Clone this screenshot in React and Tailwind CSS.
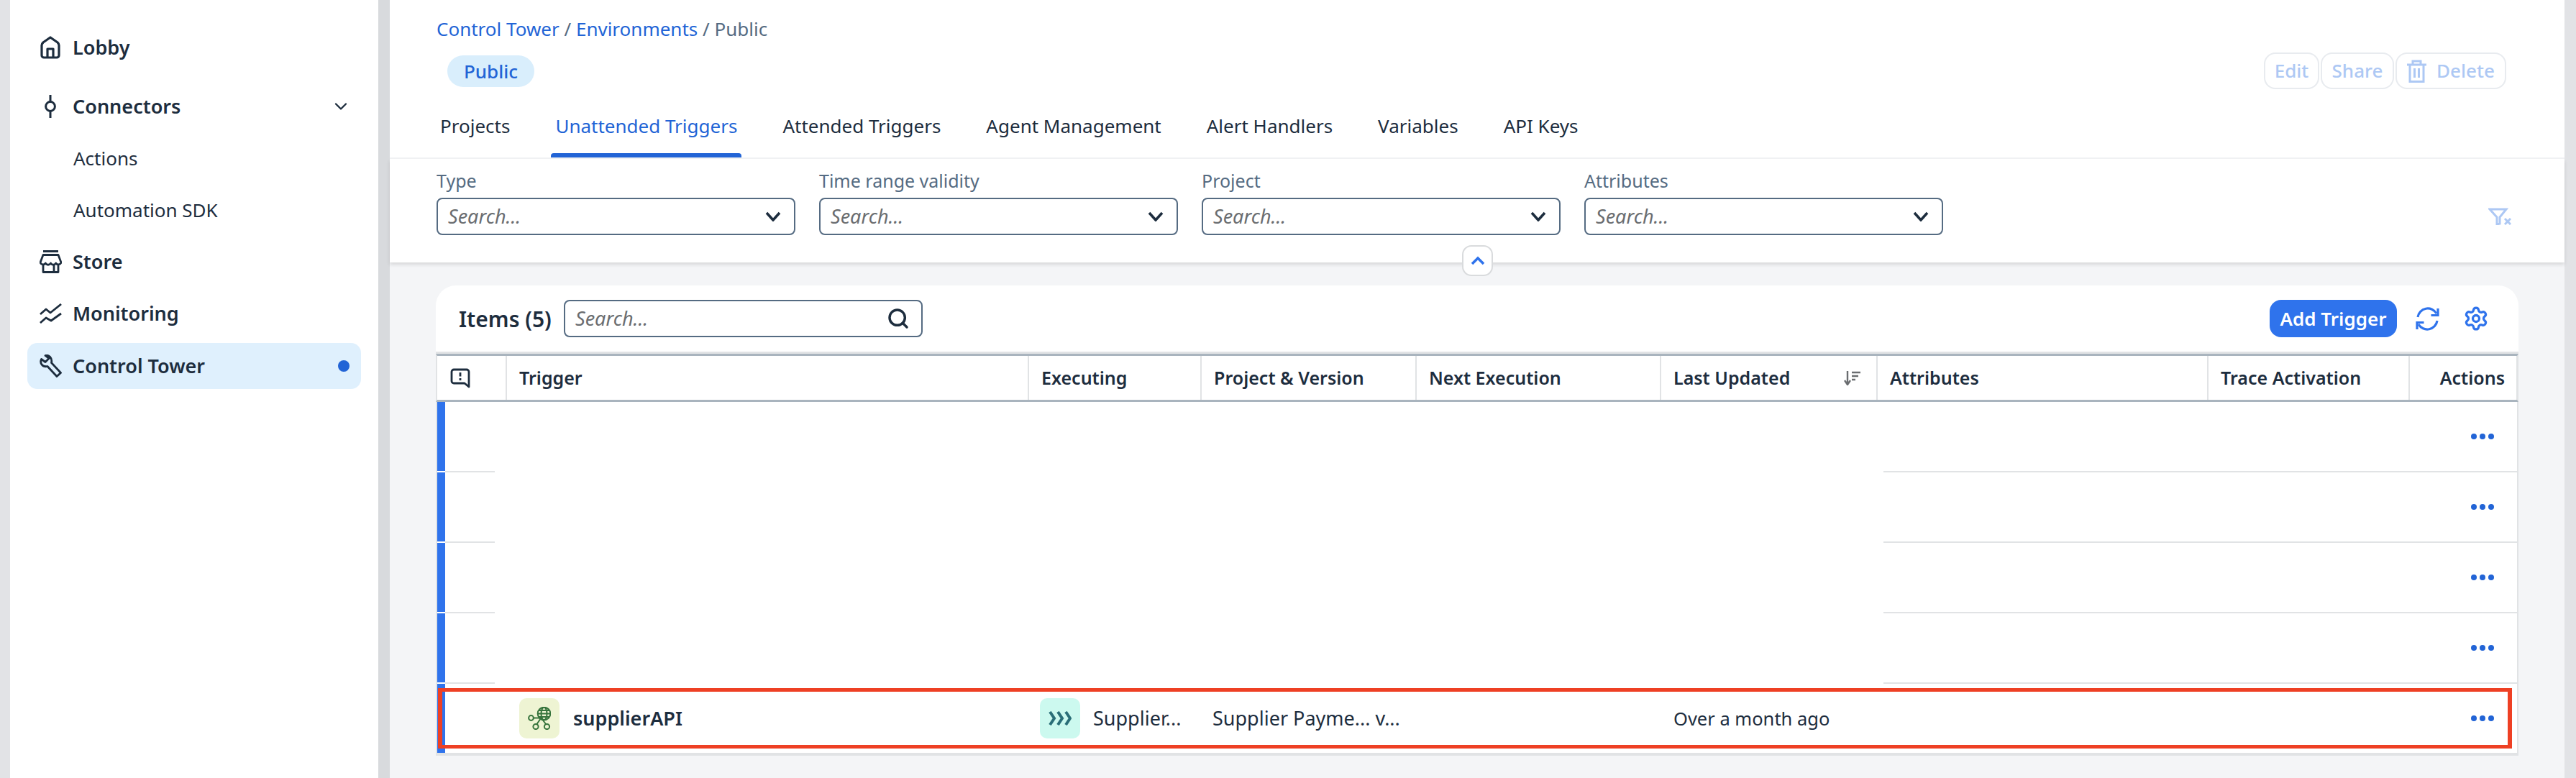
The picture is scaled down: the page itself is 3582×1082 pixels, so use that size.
import React from 'react'
import { ChevronDown, Search, Settings } from 'lucide-react'

const FONT = "font-['Noto_Sans','Open_Sans',sans-serif]"

const TABS = ['Projects', 'Unattended Triggers', 'Attended Triggers', 'Agent Management', 'Alert Handlers', 'Variables', 'API Keys']
const FILTERS = ['Type', 'Time range validity', 'Project', 'Attributes']
const COLS = 'grid-cols-[97px_726px_240px_299px_340px_301px_460px_280px_150px]'

function HomeIcon() {
  return (
    <svg width="28" height="32" viewBox="0 0 28 32" fill="none" stroke="#1d2d3e" strokeWidth="3.2" strokeLinejoin="round">
      <path d="M2 13 C2 11 3 10 4 9 L14 2 L24 9 C25 10 26 11 26 13 V27 a3 3 0 0 1 -3 3 H5 a3 3 0 0 1 -3 -3 Z" />
      <path d="M10 30 V18 h8 V30" />
    </svg>
  )
}

function ConnectorIcon() {
  return (
    <svg width="16" height="32" viewBox="0 0 16 32" fill="none" stroke="#1d2d3e" strokeWidth="3">
      <circle cx="8" cy="16" r="6.4" />
      <path d="M8 0 V9 M8 23 V32" />
    </svg>
  )
}

function StoreIcon() {
  return (
    <svg width="31" height="32" viewBox="0 0 31 32" fill="none" stroke="#1d2d3e" strokeWidth="2.8" strokeLinejoin="round">
      <path d="M5 1.5 H26 M5 6.5 H26 L30 17 a4 4 0 0 1 -7.3 1 a4 4 0 0 1 -7.2 0 a4 4 0 0 1 -7.2 0 a4 4 0 0 1 -7.3 -1 Z" />
      <path d="M5 21 V30.5 H26 V21 M5 30.5 H20 V21" />
    </svg>
  )
}

function MonitorIcon() {
  return (
    <svg width="31" height="28" viewBox="0 0 31 28" fill="none" stroke="#1d2d3e" strokeWidth="2.8" strokeLinejoin="round">
      <path d="M1 15 L9 8 L15 13 L30 1" />
      <path d="M1 27 L9 20 L16 24 L30 14" />
    </svg>
  )
}

function WrenchIcon() {
  return (
    <svg width="31" height="32" viewBox="0 0 31 32" fill="none" stroke="#1d2d3e" strokeWidth="2.8" strokeLinejoin="round">
      <path d="M8 1.5 L13 5.5 L8 10.5 L2.5 6.5 C0 12 4 18 11 16.5 L24 30.5 L29.5 25.5 L16.5 11.5 C18 5 13 0 8 1.5 Z" />
    </svg>
  )
}

function NavItem({ icon, label, active, chevron }) {
  return (
    <div className={`flex h-[64px] w-[464px] items-center rounded-[14px] pl-[16px] pr-[16px] ${active ? 'bg-[#dff0fd]' : ''}`}>
      <span className="mr-[15px] flex w-[32px] shrink-0 items-center justify-center">{icon}</span>
      <span className="flex-1 text-[27px] font-semibold text-[#1d2d3e]">{label}</span>
      {chevron && <ChevronDown size={28} strokeWidth={2} color="#1d2d3e" className="mr-[-2px]" />}
      {active && <span className="h-[16px] w-[16px] rounded-full bg-[#2264d6]" />}
    </div>
  )
}

function Sidebar() {
  return (
    <aside className="w-[512px] shrink-0 bg-white pl-[24px] pt-[34px]">
      <NavItem icon={<HomeIcon />} label="Lobby" />
      <div className="mt-[18px]">
        <NavItem icon={<ConnectorIcon />} label="Connectors" chevron />
      </div>
      <div className="pl-[64px] pt-[4px] text-[26px] text-[#1d2d3e]">
        <div className="flex h-[72px] items-center">Actions</div>
        <div className="flex h-[72px] items-center">Automation SDK</div>
      </div>
      <div className="mt-[4px] flex flex-col gap-[8px]">
        <NavItem icon={<StoreIcon />} label="Store" />
        <NavItem icon={<MonitorIcon />} label="Monitoring" />
        <div className="mt-[1px]">
          <NavItem icon={<WrenchIcon />} label="Control Tower" active />
        </div>
      </div>
    </aside>
  )
}

function ActionButton({ children, className }) {
  return (
    <div className={`flex h-[51px] items-center justify-center gap-[14px] rounded-[16px] border-2 border-[#e8ebef] bg-white text-[26px] font-medium text-[#adc8f4] ${className}`}>
      {children}
    </div>
  )
}

function Header() {
  return (
    <div className="bg-white">
      <div className="flex h-[221px] flex-col border-b-2 border-[#f2f3f5]">
        <div className="flex">
          <div className="flex-1 pl-[65px]">
            <div className="pt-[24px] text-[26px] leading-[32px] text-[#556b82]">
              <span className="text-[#2264d6]">Control Tower</span> / <span className="text-[#2264d6]">Environments</span> / Public
            </div>
            <div className="ml-[15px] mt-[21px] flex h-[44px] w-[121px] items-center justify-center rounded-full bg-[#d9eefc] text-[26px] font-medium text-[#2264d6]">Public</div>
          </div>
          <div className="mr-[81px] mt-[73px] flex gap-[2px]">
            <ActionButton className="w-[77px]">Edit</ActionButton>
            <ActionButton className="w-[102px]">Share</ActionButton>
            <ActionButton className="w-[154px]">
              <svg width="27" height="32" viewBox="0 0 27 32" fill="none" stroke="#adc8f4" strokeWidth="3">
                <path d="M0 7 H27 M8 7 V2 H19 V7 M4 7 V30.5 H23 V7 M10.5 12 V25 M16.5 12 V25" />
              </svg>
              Delete
            </ActionButton>
          </div>
        </div>
        <div className="mt-auto flex gap-[51px] pl-[64px]">
          {TABS.map(tab => (
            <div key={tab} className="flex flex-col items-stretch">
              <div className={`h-[54px] px-[6px] text-[26px] leading-[32px] ${tab === 'Unattended Triggers' ? 'text-[#2264d6]' : 'text-[#1d2d3e]'}`}>{tab}</div>
              <div className={`h-[6px] rounded-t-[4px] ${tab === 'Unattended Triggers' ? 'bg-[#2264d6]' : ''}`} />
            </div>
          ))}
        </div>
      </div>
      <div className="relative flex h-[144px] gap-[33px] pl-[65px] pt-[16px] shadow-[0_3px_5px_rgba(0,0,0,0.12)]">
        {FILTERS.map(label => (
          <div key={label} className="w-[499px]">
            <div className="h-[38px] text-[25px] leading-[28px] text-[#556b82]">{label}</div>
            <div className="flex h-[52px] items-center justify-between rounded-[8px] border-2 border-[#556b82] pl-[14px] pr-[18px]">
              <span className="text-[27px] italic text-[#6a6d70]">Search...</span>
              <svg width="22" height="14" viewBox="0 0 22 14" fill="none" stroke="#1d2d3e" strokeWidth="3.6">
                <path d="M2 2 L11 12 L20 2" />
              </svg>
            </div>
          </div>
        ))}
        <svg className="absolute right-[74px] top-[68px]" width="32" height="24" viewBox="0 0 32 24" fill="none" stroke="#adc8f4" strokeWidth="3">
          <path d="M2 2 H25 L16 13 V22 L12 23 V13 Z" />
          <path d="M23 15 L31 23 M31 15 L23 23" />
        </svg>
        {/* collapse handle sits over the panel edge */}
        <div className="absolute left-[1491px] top-[120px] flex h-[43px] w-[43px] items-center justify-center rounded-[13px] border-2 border-[#d9dbdd] bg-white">
          <svg width="20" height="13" viewBox="0 0 20 13" fill="none" stroke="#2f73ec" strokeWidth="3.6">
            <path d="M2 11 L10 3 L18 11" />
          </svg>
        </div>
      </div>
    </div>
  )
}

function HeaderCell({ children, className = '' }) {
  return (
    <div className={`flex items-center border-r-2 border-[#e1e3e5] pl-[17px] text-[25px] font-semibold text-[#1d2d3e] ${className}`}>
      {children}
    </div>
  )
}

function Dots({ className = '' }) {
  return (
    <div className={`flex gap-[4px] pr-[32px] ${className}`}>
      <span className="h-[8px] w-[8px] rounded-full bg-[#2264d6]" />
      <span className="h-[8px] w-[8px] rounded-full bg-[#2264d6]" />
      <span className="h-[8px] w-[8px] rounded-full bg-[#2264d6]" />
    </div>
  )
}

function EmptyRow() {
  return (
    <div className="relative flex h-[98px] items-center justify-end border-b-2 border-transparent">
      <span className="absolute bottom-[-2px] left-0 h-[2px] w-[69px] bg-[#e1e3e5]" />
      <span className="absolute bottom-[-2px] right-0 h-[2px] w-[881px] bg-[#e1e3e5]" />
      <Dots />
    </div>
  )
}

function Table() {
  return (
    <div className="mt-[20px] border-t-[3px] border-[#e1e3e5]">
      <div className={`grid h-[67px] ${COLS} border-x-2 border-b-[3px] border-t-[3px] border-b-[#a9b4be] border-t-[#a9b4be] border-x-[#e1e3e5]`}>
        <HeaderCell className="pl-[18px]">
          <svg width="28" height="28" viewBox="0 0 28 28" fill="none" stroke="#1d2d3e" strokeWidth="2.8" strokeLinejoin="round">
            <path d="M5 2 H23 a3 3 0 0 1 3 3 V26 L20 21 H5 a3 3 0 0 1 -3 -3 V5 a3 3 0 0 1 3 -3 Z" />
            <path d="M14 6 V11.5 M14 14 V17" />
          </svg>
        </HeaderCell>
        <HeaderCell>Trigger</HeaderCell>
        <HeaderCell>Executing</HeaderCell>
        <HeaderCell>Project &amp; Version</HeaderCell>
        <HeaderCell>Next Execution</HeaderCell>
        <HeaderCell className="justify-between pr-[22px]">
          Last Updated
          <svg width="23" height="20" viewBox="0 0 23 20" fill="none" stroke="#6a6d70" strokeWidth="2.4">
            <path d="M5 0 V18 M1 13 L5 19 L9 13 M11 2 H23 M11 7 H20 M11 12 H16" />
          </svg>
        </HeaderCell>
        <HeaderCell>Attributes</HeaderCell>
        <HeaderCell>Trace Activation</HeaderCell>
        <HeaderCell className="justify-end border-r-0 pl-0 pr-[16px]">Actions</HeaderCell>
      </div>
      <div className="flex border-x-2 border-b-4 border-[#e1e3e5] bg-white">
        <div className="flex w-[11px] shrink-0 flex-col gap-[2px]">
          <span className="h-[96px] bg-[#2f73ec]" />
          <span className="h-[96px] bg-[#2f73ec]" />
          <span className="h-[96px] bg-[#2f73ec]" />
          <span className="h-[96px] bg-[#2f73ec]" />
          <span className="h-[96px] bg-[#2f73ec]" />
        </div>
        <div className="min-w-0 flex-1">
          <EmptyRow />
          <EmptyRow />
          <EmptyRow />
          <EmptyRow />
          <div className="relative flex h-[96px] items-center text-[#1d2d3e]">
            <div className="ml-[103px] flex h-[56px] w-[56px] shrink-0 items-center justify-center rounded-[10px] bg-[#eef4d3]">
              <svg width="32" height="32" viewBox="0 0 32 32" fill="none" stroke="#36743c" strokeWidth="2">
                <circle cx="22.5" cy="9.5" r="8.8" />
                <ellipse cx="22.5" cy="9.5" rx="4" ry="8.8" />
                <path d="M13.7 9.5 H31.3 M15.5 5 H29.5 M15.5 14 H29.5" />
                <circle cx="4.5" cy="15.5" r="3.4" />
                <circle cx="11" cy="27.5" r="3.6" />
                <circle cx="26.5" cy="27.5" r="3.6" />
                <path d="M8 15.5 H19 M18 16 L12.5 24 M19 16 L25 24" />
              </svg>
            </div>
            <span className="ml-[19px] w-[649px] shrink-0 text-[27px] font-semibold">supplierAPI</span>
            <div className="flex h-[56px] w-[56px] shrink-0 items-center justify-center rounded-[10px] bg-[#ccf9ef]">
              <svg width="32" height="20" viewBox="0 0 32 20" fill="none" stroke="#2a6e78" strokeWidth="4">
                <path d="M2 1 L8 10 L2 19 M13 1 L19 10 L13 19 M24 1 L30 10 L24 19" />
              </svg>
            </div>
            <span className="ml-[18px] w-[166px] shrink-0 text-[27px]">Supplier...</span>
            <span className="w-[641px] shrink-0 text-[27px]">Supplier Payme... v...</span>
            <span className="shrink-0 text-[25.5px]">Over a month ago</span>
            <Dots className="ml-auto" />
            {/* red annotation frame from the source screenshot */}
            <div className="absolute bottom-[6px] left-[-10px] right-[7px] top-[6px] border-x-[6px] border-y-[5px] border-[#ee4024]" />
          </div>
        </div>
      </div>
    </div>
  )
}

function ItemsCard() {
  return (
    <div className="mx-[64px] mt-[32px] rounded-t-[28px] bg-white">
      <div className="flex items-center pl-[32px] pr-[41px] pt-[20px]">
        <span className="w-[146px] shrink-0 text-[30px] font-semibold text-[#1d2d3e]">Items (5)</span>
        <div className="flex h-[52px] w-[499px] items-center justify-between rounded-[8px] border-2 border-[#556b82] pl-[14px] pr-[16px]">
          <span className="text-[27px] italic text-[#6a6d70]">Search...</span>
          <Search size={32} strokeWidth={2.6} color="#1d2d3e" />
        </div>
        <div className="ml-auto flex h-[52px] w-[177px] items-center justify-center rounded-[16px] bg-[#2f73ec] text-[26px] font-semibold text-white">Add Trigger</div>
        <svg className="ml-[26px]" width="33" height="33" viewBox="0 0 33 33" fill="none" stroke="#2f73ec" strokeWidth="3.2">
          <path d="M3 14 A14 14 0 0 1 29 9" />
          <path d="M31 2 V11.5 H21.5" />
          <path d="M30 19 A14 14 0 0 1 4 24" />
          <path d="M2 31 V21.5 H11.5" />
        </svg>
        <Settings size={36} strokeWidth={2.2} color="#2f73ec" className="ml-[33px]" />
      </div>
      <Table />
    </div>
  )
}

export default function App() {
  return (
    <div className={`flex h-[1082px] w-[3582px] overflow-hidden bg-[#e2e3e6] pl-[14px] pr-[16px] ${FONT}`}>
      <Sidebar />
      <main className="min-w-0 flex-1 border-l-[16px] border-[#d8dadd] bg-[#f4f5f7]">
        <Header />
        <ItemsCard />
      </main>
    </div>
  )
}
